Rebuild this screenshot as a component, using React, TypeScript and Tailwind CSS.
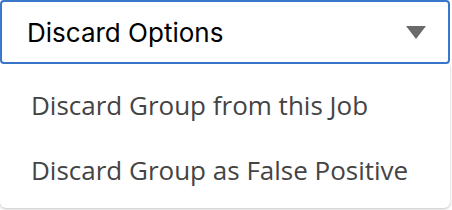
import React from 'react';

const OPTIONS = ['Discard Group from this Job', 'Discard Group as False Positive'];

const App: React.FC = () => {
    return (
        <div className="w-[452px] h-[210px] bg-white">
            <div className="w-[450px]">
                <button className="w-full h-[64px] flex items-center justify-between pl-[25px] pr-[22px] border-2 border-[#3a78cc] rounded-[4px] bg-white text-black text-[26px] font-['Inter',sans-serif]">
                    <span>Discard Options</span>
                    <svg width="20" height="13" viewBox="0 0 20 13">
                        <polygon points="0,0 20,0 10,13" fill="#6b6b6b" />
                    </svg>
                </button>
                <div className="w-full h-[144px] flex flex-col justify-center rounded-b-[6px] bg-white shadow-[0_1px_3px_rgba(0,0,0,0.25)]">
                    {OPTIONS.map(opt => (
                        <div key={opt} className="h-[65px] flex items-center pl-[31px] pt-[3px] text-[26px] text-[#444] font-['Open_Sans',sans-serif]">
                            {opt}
                        </div>
                    ))}
                </div>
            </div>
        </div>
    );
};

export default App;
